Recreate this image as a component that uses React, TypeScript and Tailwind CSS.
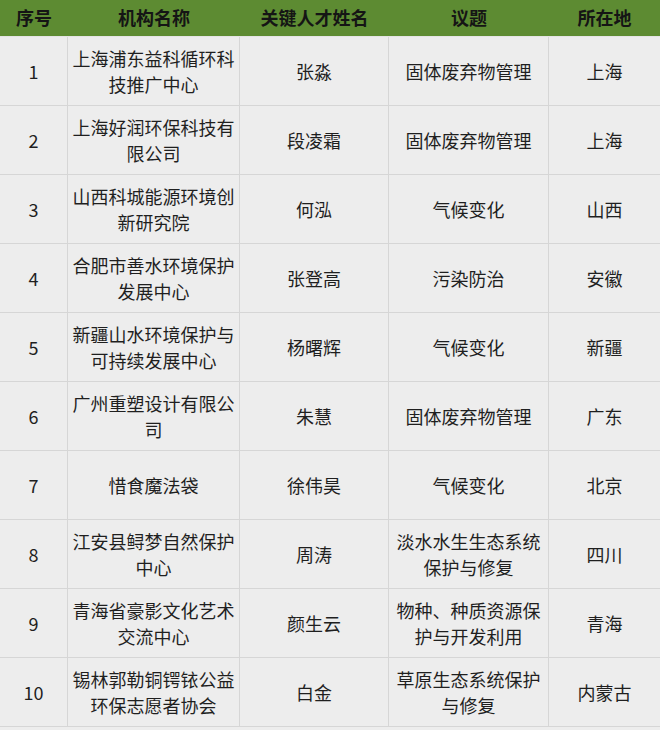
import React from "react";

const rows: [string, string[], string, string[], string][] = [
  ["1", ["上海浦东益科循环科", "技推广中心"], "张淼", ["固体废弃物管理"], "上海"],
  ["2", ["上海好润环保科技有", "限公司"], "段凌霜", ["固体废弃物管理"], "上海"],
  ["3", ["山西科城能源环境创", "新研究院"], "何泓", ["气候变化"], "山西"],
  ["4", ["合肥市善水环境保护", "发展中心"], "张登高", ["污染防治"], "安徽"],
  ["5", ["新疆山水环境保护与", "可持续发展中心"], "杨曙辉", ["气候变化"], "新疆"],
  ["6", ["广州重塑设计有限公", "司"], "朱慧", ["固体废弃物管理"], "广东"],
  ["7", ["惜食魔法袋"], "徐伟昊", ["气候变化"], "北京"],
  ["8", ["江安县鲟梦自然保护", "中心"], "周涛", ["淡水水生生态系统", "保护与修复"], "四川"],
  ["9", ["青海省豪影文化艺术", "交流中心"], "颜生云", ["物种、种质资源保", "护与开发利用"], "青海"],
  ["10", ["锡林郭勒铜锷铱公益", "环保志愿者协会"], "白金", ["草原生态系统保护", "与修复"], "内蒙古"],
];

const font = { fontFamily: '"Noto Sans CJK SC", "Noto Sans", sans-serif' };

function Lines({ lines }: { lines: string[] }) {
  return (
    <div className="flex flex-col items-center leading-[26px]">
      {lines.map((l, i) => (
        <span key={i} className="whitespace-nowrap">{l}</span>
      ))}
    </div>
  );
}

export default function App() {
  const cell =
    "h-[69px] flex items-center justify-center text-center border-b border-r border-[#d6d6d6]";
  return (
    <div className="w-[660px] h-[730px] bg-[#ededed] text-[color:#1f1f1f] text-[length:18px]" style={font}>
      <div className="grid grid-cols-[68px_172px_149px_160px_111px] h-[37px] bg-[#5d8b32] border-b border-[#e4e4e4] font-bold">
        {["序号", "机构名称", "关键人才姓名", "议题", "所在地"].map((h) => (
          <div key={h} className="flex items-center justify-center pb-[1px] text-[color:#151515]">
            {h}
          </div>
        ))}
      </div>
      <div className="grid grid-cols-[68px_172px_149px_160px_111px]">
        {rows.map((r) => (
          <React.Fragment key={r[0]}>
            <div className={cell}>{r[0]}</div>
            <div className={cell}>
              <Lines lines={r[1]} />
            </div>
            <div className={cell}>{r[2]}</div>
            <div className={cell}>
              <Lines lines={r[3]} />
            </div>
            <div className={cell + " border-r-0"}>{r[4]}</div>
          </React.Fragment>
        ))}
      </div>
    </div>
  );
}
